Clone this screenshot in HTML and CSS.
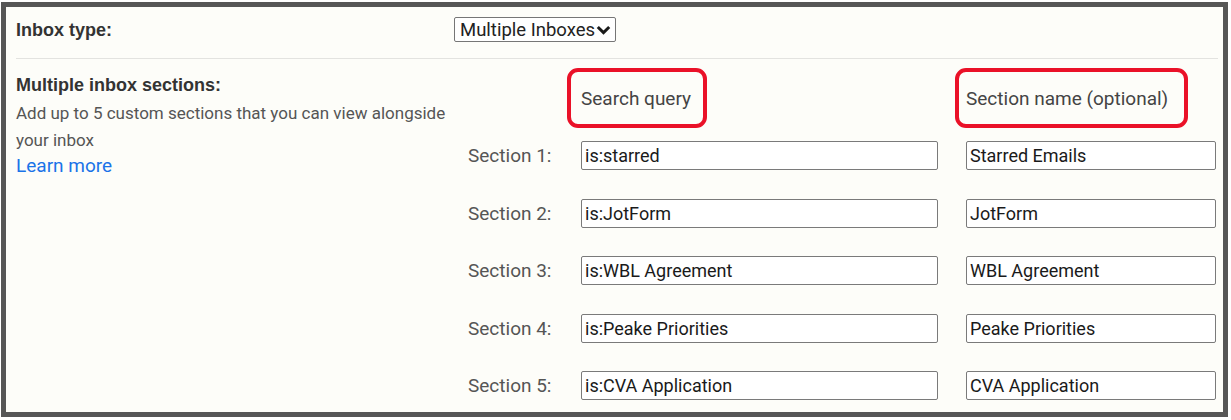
FILE: index.html
```html
<!DOCTYPE html>
<html>

<head>
  <meta charset="utf-8">
  <meta name="viewport" content="width=device-width, initial-scale=1">
  <title>Inbox settings</title>
  <link rel="stylesheet" href="styles.css">
</head>

<body>
	<div class="frame">
		<div class="row-type">
			<div class="left-col title">Inbox type:</div>
			<div class="select">
				<span>Multiple Inboxes</span>
				<svg width="15" height="10" viewBox="0 0 15 10">
					<path d="M1.8 2 L7.5 7.6 L13.2 2" fill="none" stroke="#1a1a1a" stroke-width="3"/>
				</svg>
			</div>
		</div>

		<div class="divider"></div>

		<div class="row-sections">
			<div class="left-col">
				<div class="title">Multiple inbox sections:</div>
				<p class="desc">Add up to 5 custom sections that you can view alongside your inbox</p>
				<a class="learn" href="#">Learn more</a>
			</div>

			<div class="grid">
				<div class="blank"></div>
				<div class="head head-query">Search query</div>
				<div class="head head-name">Section name (optional)</div>

				<div class="lbl">Section 1:</div>
				<input class="field query" value="is:starred">
				<input class="field name" value="Starred Emails">

				<div class="lbl">Section 2:</div>
				<input class="field query" value="is:JotForm">
				<input class="field name" value="JotForm">

				<div class="lbl">Section 3:</div>
				<input class="field query" value="is:WBL Agreement">
				<input class="field name" value="WBL Agreement">

				<div class="lbl">Section 4:</div>
				<input class="field query" value="is:Peake Priorities">
				<input class="field name" value="Peake Priorities">

				<div class="lbl">Section 5:</div>
				<input class="field query" value="is:CVA Application">
				<input class="field name" value="CVA Application">
			</div>
		</div>
	</div>
</body>

</html>
```

FILE: styles.css
```css
body {
	margin: 0;
	background-color: #ffffff;
	font-family: Roboto, "Liberation Sans", Arial, sans-serif;
}

.frame {
	box-sizing: border-box;
	width: 1227px;
	height: 415px;
	margin: 2px 0 0 1px;
	border: 5px solid #565656;
	background-color: #fdfdf9;
	padding: 0 5px 0 10px;
	overflow: hidden;
}

.left-col {
	width: 438px;
	flex: none;
}

.title {
	font-family: "Liberation Sans", Arial, sans-serif;
	font-size: 18px;
	font-weight: bold;
	color: #333333;
	line-height: 20px;
}

.row-type {
	display: flex;
	align-items: center;
	padding: 10px 0 16px 0;
}

.select {
	box-sizing: border-box;
	height: 25px;
	width: 162px;
	display: flex;
	align-items: center;
	gap: 1px;
	padding: 0 0 0 5px;
	border: 1px solid #767676;
	border-radius: 2px;
	background: #ffffff;
	font-size: 18.5px;
	color: #222222;
}

.divider {
	height: 1px;
	background-color: #e3e3e0;
}

.row-sections {
	display: flex;
	padding-top: 9px;
}

.row-sections .left-col {
	padding-top: 7px;
}

.desc {
	margin: 5px 0 0 0;
	font-size: 17px;
	line-height: 27px;
	color: #555555;
	width: 436px;
}

.learn {
	display: block;
	margin-top: 0;
	font-size: 19px;
	color: #1a73e8;
	text-decoration: none;
}

.grid {
	display: grid;
	grid-template-columns: 99px 357px 250px;
	column-gap: 28px;
	row-gap: 28.5px;
	align-items: center;
}

.blank {
	height: 0;
}

.head {
	box-sizing: border-box;
	display: flex;
	align-items: center;
	height: 60px;
	margin-bottom: -15.5px;
	border: 4px solid #ea1128;
	border-radius: 11px;
	font-size: 19px;
	color: #444444;
}

.head-query {
	width: 140px;
	margin-left: -14px;
	padding-left: 10px;
}

.head-name {
	width: 233px;
	margin-left: -11px;
	padding-left: 7px;
}

.lbl {
	padding-left: 14px;
	font-size: 19px;
	color: #555555;
}

.field {
	box-sizing: border-box;
	height: 29px;
	margin: 0;
	padding: 0 3px;
	border: 1px solid #7a7a7a;
	border-radius: 2px;
	background: #ffffff;
	font-family: Roboto, "Liberation Sans", Arial, sans-serif;
	font-size: 18px;
	color: #1a1a1a;
	outline: none;
}

.query {
	width: 357px;
}

.name {
	width: 250px;
}
```
